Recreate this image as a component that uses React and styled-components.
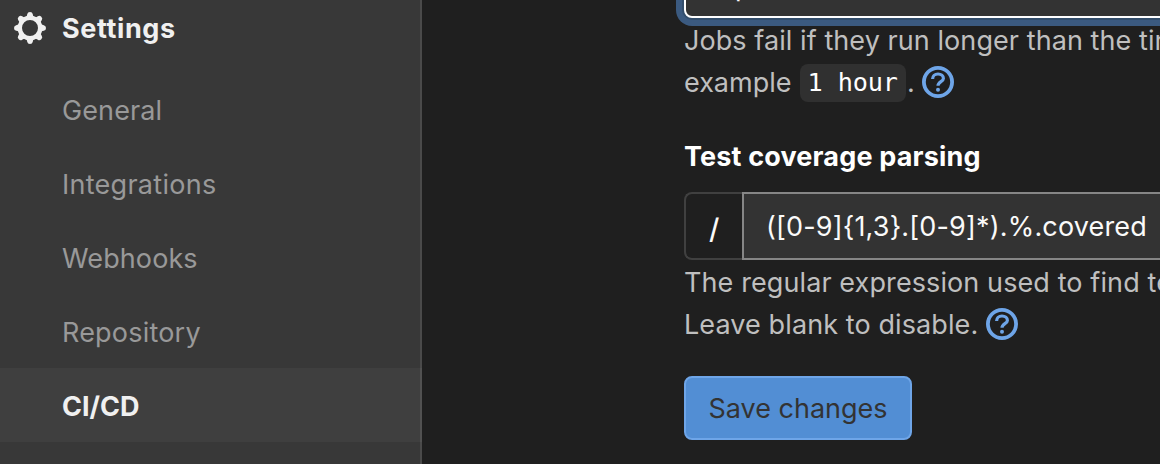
import React from 'react';
import styled, { createGlobalStyle } from 'styled-components';

const Global = createGlobalStyle`
  *, *::before, *::after { box-sizing: border-box; }
  html, body { margin: 0; height: 100%; background: #1f1f1f; overflow: hidden; }
  body { font-family: Inter, "Liberation Sans", sans-serif; font-size: 27px; line-height: 42px; color: #fafafa; }
`;

const Page = styled.div`
  display: flex;
  width: 100%;
  height: 464px;
  overflow: hidden;
`;

const Sidebar = styled.nav`
  flex: 0 0 422px;
  background: #383838;
  border-right: 2px solid #4a4a4a;
`;

const SidebarHeader = styled.div`
  display: flex;
  align-items: flex-start;
  gap: 16px;
  height: 72px;
  padding: 8px 0 0 14px;
  color: #f0f0f0;
  font-weight: 650;
`;

const GearIcon = styled.svg`
  display: block;
  width: 32px;
  height: 32px;
  margin-top: 4px;
  fill: currentColor;
`;

const NavItem = styled.a`
  display: block;
  height: 74px;
  padding: 18px 0 14px 62px;
  margin-right: -2px;
  color: ${(p) => (p.$active ? '#f0f0f0' : '#999')};
  font-weight: ${(p) => (p.$active ? 650 : 400)};
  background: ${(p) => (p.$active ? 'rgba(255, 255, 255, 0.04)' : 'transparent')};
`;

const Label = styled.span`
  letter-spacing: ${(p) => p.$track || 0}px;
  white-space: pre;
`;

const Main = styled.main`
  flex: 1;
  min-width: 0;
  padding-left: 262px;
`;

const TimeoutInput = styled.div`
  width: 620px;
  height: 66px;
  margin-top: -48px;
  padding: 12px 18px;
  background: #333;
  border: 2px solid #fff;
  border-radius: 8px;
  box-shadow: 0 0 0 2px #334e6c, 0 0 0 8px #3b5a80;
`;

const Help = styled.div`
  padding-top: ${(p) => p.$top}px;
  color: #bfbfbf;
  white-space: nowrap;
`;

const HelpLine = styled.div`
  display: flex;
  align-items: center;
  height: 42px;
`;

const Code = styled.code`
  height: 38px;
  margin: 0 1px 0 8px;
  padding: 0 8px;
  border-radius: 8px;
  background: #303030;
  color: #fff;
  font: 25.2px/38px "DejaVu Sans Mono", monospace;
  letter-spacing: -0.1px;
`;

const HelpIcon = styled.svg`
  display: block;
  width: 32px;
  height: 32px;
  margin: 0 0 2px ${(p) => p.$gap}px;
  color: #6ea5e8;
`;

const FieldTitle = styled.div`
  margin-top: 32px;
  font-weight: 650;
  color: #fff;
`;

const InputGroup = styled.div`
  display: flex;
  width: 620px;
  height: 68px;
  margin-top: 14px;
`;

const Prefix = styled.div`
  width: 58px;
  padding: 14px 0 0 23px;
  border: 2px solid #404040;
  border-right: 0;
  border-radius: 8px 0 0 8px;
  font-size: 28px;
  font-weight: 500;
`;

const RegexInput = styled.div`
  flex: 1;
  padding: 12px 22px;
  background: #333;
  border: 2px solid #868686;
  color: #fafafa;
  white-space: nowrap;
`;

const SaveButton = styled.button`
  display: flex;
  align-items: center;
  justify-content: center;
  width: 228px;
  height: 64px;
  margin-top: 30px;
  padding: 1px 0 0;
  border: 2px solid #6ea5e8;
  border-radius: 8px;
  background: #528ed4;
  color: #333;
  font: inherit;
`;

function Question({ gap }) {
  return (
    <HelpIcon $gap={gap} viewBox="0 0 16 16" fill="none">
      <circle cx="8" cy="8" r="7.05" stroke="currentColor" strokeWidth="1.9" />
      <path d="M5.3 6.5C5.3 5 6.4 4 8 4s2.7.9 2.7 2.2C10.7 7.8 8 7.9 8 9.9" stroke="currentColor" strokeWidth="1.6" />
      <circle cx="8" cy="11.9" r="1" fill="currentColor" />
    </HelpIcon>
  );
}

function Gear() {
  const teeth = [0, 45, 90, 135, 180, 225, 270, 315];
  return (
    <GearIcon viewBox="0 0 32 32">
      <circle cx="16" cy="16" r="10.2" fill="none" stroke="currentColor" strokeWidth="4.4" />
      {teeth.map((angle) => (
        <path
          key={angle}
          transform={`rotate(${angle} 16 16)`}
          d="M10.6 6.2C12.6 5.3 12.9 4 13.2 2.2Q13.6 0 16 0T18.8 2.2C19.1 4 19.4 5.3 21.4 6.2Z"
        />
      ))}
    </GearIcon>
  );
}

const items = [
  ['General', 0.1],
  ['Integrations', 0.27],
  ['Webhooks', 0.1],
  ['Repository', 0.2],
  ['CI/CD', 0, true],
];

export default function App() {
  return (
    <>
      <Global />
      <Page>
        <Sidebar>
          <SidebarHeader>
            <Gear />
            <Label $track={0.6}>Settings</Label>
          </SidebarHeader>
          {items.map(([name, track, active]) => (
            <NavItem key={name} $active={active}>
              <Label $track={track}>{name}</Label>
            </NavItem>
          ))}
        </Sidebar>
        <Main>
          <TimeoutInput>
            <Label>Expires</Label>
          </TimeoutInput>
          <Help $top={2}>
            <HelpLine><Label $track={0.07}>Jobs fail if they run longer than the timeout</Label></HelpLine>
            <HelpLine>
              <Label>example</Label>
              <Code>1 hour</Code>
              <Label>.</Label>
              <Question gap={7} />
            </HelpLine>
          </Help>
          <FieldTitle><Label $track={0.16}>Test coverage parsing</Label></FieldTitle>
          <InputGroup>
            <Prefix>/</Prefix>
            <RegexInput><Label $track={0.17}>{'([0-9]{1,3}.[0-9]*).%.covered'}</Label></RegexInput>
          </InputGroup>
          <Help $top={2}>
            <HelpLine><Label $track={0.1}>The regular expression used to find test</Label></HelpLine>
            <HelpLine>
              <Label $track={0.1}>Leave blank to disable.</Label>
              <Question gap={8} />
            </HelpLine>
          </Help>
          <SaveButton><Label>Save changes</Label></SaveButton>
        </Main>
      </Page>
    </>
  );
}
